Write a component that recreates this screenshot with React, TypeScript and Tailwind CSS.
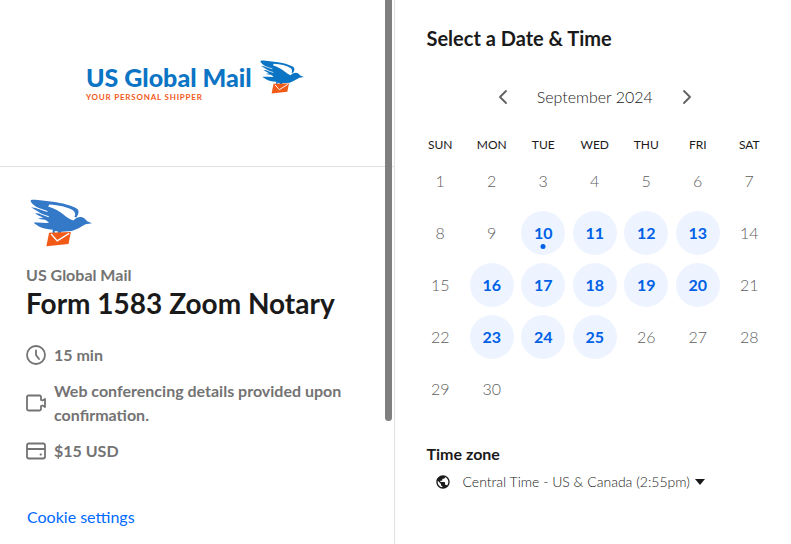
import { MdPublic } from "react-icons/md";

const weekdays = ["SUN", "MON", "TUE", "WED", "THU", "FRI", "SAT"];
const weeks = [
  [1, 2, 3, 4, 5, 6, 7],
  [8, 9, 10, 11, 12, 13, 14],
  [15, 16, 17, 18, 19, 20, 21],
  [22, 23, 24, 25, 26, 27, 28],
  [29, 30],
];
const availableDays = [10, 11, 12, 13, 16, 17, 18, 19, 20, 23, 24, 25];
const today = 10;

const Bird = ({ className }: { className: string }) => (
  <svg viewBox="45 28 182 141" className={className} aria-hidden="true">
    <g fill="currentColor">
      <path d="M47 32C52 29 60 31 68 31L112 36C140 40 165 46 182 56C190 61 189 72 181 82L175 80C180 74 178 67 171 61C154 51 130 46 102 44L98 50C118 57 134 65 144 74C154 82 162 88 172 91C184 80 196 78 206 86L213 93L227 99L208 102C196 109 183 117 168 122L137 124L133 133L128 133L126 123L118 122L117 130L111 130L112 118C94 118 79 113 70 108L55 98C69 96 85 99 101 98C96 93 92 90 89 89L68 86C77 84 81 83 84 83C77 79 65 75 60 69L80 72L48 52L70 56C58 47 46 40 47 32Z" />
    </g>
    <path
      d="M64 54L96 65M74 71L100 80"
      stroke="#fff"
      strokeWidth="3"
    />
    <path fill="#f15a17" d="M101 127L165 125L158 160L93 167Z" />
    <path d="M107 131L125 151L160 129" fill="none" stroke="#fff" strokeWidth="4" />
  </svg>
);

const Logo = () => (
  <div className="flex items-start justify-center gap-2 pr-1">
    <div className="pt-px whitespace-nowrap">
      <p className="text-[25px] leading-8 font-black text-[#0b74c4]">US Global Mail</p>
      <p className="text-[8px] leading-2 font-bold tracking-widest text-[#f15a17]">
        YOUR PERSONAL SHIPPER
      </p>
    </div>
    <Bird className="h-[34px] w-11 text-[#0b74c4]" />
  </div>
);

// All the outline icons share the 20px grid
const Icon = ({ d, className = "size-5" }: { d: string; className?: string }) => (
  <svg
    viewBox="0 0 20 20"
    className={`shrink-0 ${className}`}
    fill="none"
    stroke="currentColor"
    strokeWidth="1.8"
    strokeLinecap="round"
    strokeLinejoin="round"
    aria-hidden="true"
  >
    <path d={d} />
  </svg>
);

const clockPath = "M10 1A9 9 0 1 1 10 19A9 9 0 1 1 10 1ZM10 5.500V10L13 14";
const videoPath =
  "M15 7V4Q15 2.500 13.500 2.500H2.500Q1 2.500 1 4V16Q1 17.500 2.500 17.500H13.500Q15 17.500 15 16V13L16.500 12.500L19 14V6L16.500 7.500Z";
const cardPath =
  "M3 2.500H17Q19 2.500 19 4.500V15.500Q19 17.500 17 17.500H3Q1 17.500 1 15.500V4.500Q1 2.500 3 2.500ZM1 8H19M14.500 13.500H15";

const EventDetails = () => (
  <section className="relative flex w-[calc(50%-1px)] flex-col border-r border-[#e1e1e1]">
    <div className="border-b border-[#e1e1e1] pt-[60px] pb-[65px]">
      <Logo />
    </div>
    <div className="px-[26px] pt-8">
      <Bird className="ml-1 h-12 w-[62px] text-[#3478c8]" />
      <p className="mt-4 text-base leading-6 font-bold text-[#737373]">US Global Mail</p>
      <h1 className="text-[28px] leading-8 font-bold whitespace-nowrap">Form 1583 Zoom Notary</h1>
      <ul className="mt-6 space-y-3 text-base leading-6 font-bold text-[#737373]">
        <li className="flex items-center gap-2">
          <Icon d={clockPath} />
          15 min
        </li>
        <li className="flex items-center gap-2">
          <Icon d={videoPath} />
          Web conferencing details provided upon confirmation.
        </li>
        <li className="flex items-center gap-2">
          <Icon d={cardPath} />
          $15 USD
        </li>
      </ul>
      <a href="#cookies" className="mt-[42px] ml-px inline-block text-base leading-6 text-[#0069ff]">
        Cookie settings
      </a>
    </div>
    <div className="absolute top-0 right-0.5 h-[421px] w-[7px] rounded-b-full bg-[#7f7f7f]" />
  </section>
);

const Day = ({ day }: { day: number }) => {
  if (!availableDays.includes(day)) {
    return (
      <button type="button" disabled className="size-11 text-base font-light text-[#606060]">
        {day}
      </button>
    );
  }
  return (
    <button
      type="button"
      className="relative size-11 rounded-full bg-[#edf4ff] text-base font-bold text-[#0060e6]"
    >
      {day}
      {day === today && (
        <span className="absolute bottom-1.5 left-1/2 size-[5px] -translate-x-1/2 rounded-full bg-[#0060e6]" />
      )}
    </button>
  );
};

const Calendar = () => (
  <div>
    <div className="flex items-center justify-center gap-5">
      <button type="button" aria-label="Previous month" className="p-1 text-[#606060]">
        <Icon d="M13 4L7 10L13 16" />
      </button>
      <p className="text-base leading-6 font-light">September 2024</p>
      <button type="button" aria-label="Next month" className="p-1 text-[#606060]">
        <Icon d="M7 4L13 10L7 16" />
      </button>
    </div>
    <table className="mt-6 w-full table-fixed">
      <thead>
        <tr>
          {weekdays.map((name) => (
            <th key={name} className="h-5 text-xs font-normal">
              {name}
            </th>
          ))}
        </tr>
      </thead>
      <tbody>
        {weeks.map((week) => (
          <tr key={week[0]}>
            {week.map((day) => (
              <td key={day} className="h-[52px] text-center">
                <Day day={day} />
              </td>
            ))}
          </tr>
        ))}
      </tbody>
    </table>
  </div>
);

const App = () => {
  return (
    <main className="flex min-h-screen bg-white font-['Lato','Open_Sans',sans-serif] text-[#1a1a1a]">
      <EventDetails />
      <section className="flex-1 pt-6">
        <h2 className="px-8 text-[20px] leading-7 font-bold">Select a Date &amp; Time</h2>
        <div className="mt-[31px] pr-4 pl-5">
          <Calendar />
        </div>
        <div className="mt-[27px] px-8">
          <label htmlFor="timezone" className="text-base leading-6 font-bold">
            Time zone
          </label>
          <div className="mt-1 flex items-center pl-2">
            <MdPublic size={16} className="mr-3 shrink-0" />
            <select
              id="timezone"
              className="appearance-none text-sm leading-6 font-light outline-none"
              defaultValue="central"
            >
              <option value="central">Central Time - US &amp; Canada (2:55pm)</option>
            </select>
            <svg viewBox="0 0 10 6" className="ml-1 h-1.5 w-2.5" fill="currentColor" aria-hidden="true">
              <path d="M0 0H10L5 6Z" />
            </svg>
          </div>
        </div>
      </section>
    </main>
  );
};

export default App;
